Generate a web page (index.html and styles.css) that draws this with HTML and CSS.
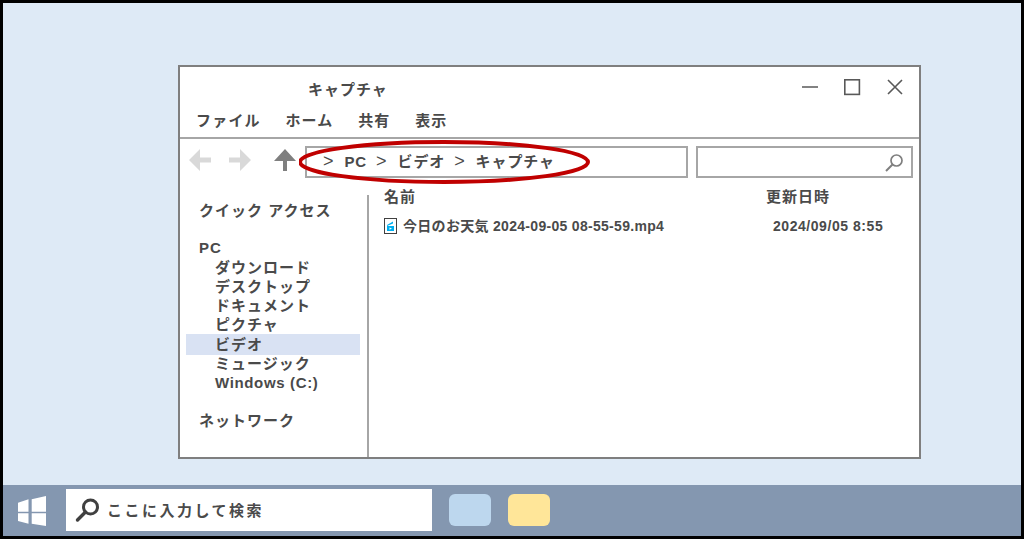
FILE: index.html
```html
<!DOCTYPE html>
<html lang="ja">

<head>
    <meta charset="UTF-8">
    <title>キャプチャ</title>
    <link rel="stylesheet" href="styles.css">
</head>

<body>
    <div class="screen">
        <div class="desktop">
            <div class="window">
                <div class="title-row">
                    <span class="title">キャプチャ</span>
                    <div class="win-buttons">
                        <svg width="18" height="18" viewBox="0 0 18 18"><path d="M1 9H17" stroke="#595959" stroke-width="1.5" fill="none"/></svg>
                        <svg width="18" height="18" viewBox="0 0 18 18"><rect x="1.8" y="1.8" width="14.6" height="14.6" stroke="#595959" stroke-width="1.6" fill="none"/></svg>
                        <svg class="close" width="18" height="18" viewBox="0 0 18 18"><path d="M2 2L16 16M16 2L2 16" stroke="#595959" stroke-width="1.6" fill="none"/></svg>
                    </div>
                </div>
                <div class="menu-row">
                    <span>ファイル</span>
                    <span>ホーム</span>
                    <span>共有</span>
                    <span>表示</span>
                </div>
                <div class="toolbar">
                    <div class="nav-buttons">
                        <svg width="22" height="22" viewBox="0 0 22 22"><path d="M0 11L11 0V8.5H22V13.5H11V22Z" fill="#d9d9d9"/></svg>
                        <svg width="22" height="22" viewBox="0 0 22 22"><path d="M22 11L11 0V8.5H0V13.5H11V22Z" fill="#d9d9d9"/></svg>
                        <svg class="up" width="22" height="22" viewBox="0 0 22 22"><path d="M11 0L22 12H13V22H9V12H0Z" fill="#7f7f7f"/></svg>
                    </div>
                    <div class="address">
                        <span class="sep">&gt;</span><span>PC</span>
                        <span class="sep">&gt;</span><span>ビデオ</span>
                        <span class="sep">&gt;</span><span>キャプチャ</span>
                    </div>
                    <div class="search-box">
                        <svg width="19" height="19" viewBox="0 0 19 19"><circle cx="11.5" cy="7.5" r="5.5" stroke="#7f7f7f" stroke-width="1.7" fill="none"/><path d="M7.5 11.5L1 18" stroke="#7f7f7f" stroke-width="2" fill="none"/></svg>
                    </div>
                </div>
                <div class="content">
                    <div class="sidebar">
                        <div class="side-head">クイック アクセス</div>
                        <div class="side-head gap">PC</div>
                        <div class="side-item">ダウンロード</div>
                        <div class="side-item">デスクトップ</div>
                        <div class="side-item">ドキュメント</div>
                        <div class="side-item">ピクチャ</div>
                        <div class="side-item selected">ビデオ</div>
                        <div class="side-item">ミュージック</div>
                        <div class="side-item latin">Windows (C:)</div>
                        <div class="side-head gap network">ネットワーク</div>
                    </div>
                    <div class="files">
                        <div class="file-head">
                            <span>名前</span>
                            <span>更新日時</span>
                        </div>
                        <div class="file-row">
                            <svg width="13" height="16" viewBox="0 0 13 16"><rect x="0.5" y="0.5" width="12" height="15" fill="#fff" stroke="#404040"/><path d="M3 8H10V13H3Z" fill="#00b0f0"/><path d="M3 7L9 3.5V5.5L3 8Z" fill="#00b0f0"/><path d="M5.5 9.5L8 10.5L5.5 11.8Z" fill="#fff"/></svg>
                            <span class="file-name">今日のお天気 2024-09-05 08-55-59.mp4</span>
                            <span class="file-date">2024/09/05 8:55</span>
                        </div>
                    </div>
                </div>
                <svg class="callout" width="292" height="48" viewBox="0 0 292 48"><ellipse cx="145" cy="24" rx="144" ry="20" stroke="#c00000" stroke-width="4" fill="none"/></svg>
            </div>
        </div>
        <div class="taskbar">
            <svg class="start" width="28" height="30" viewBox="0 0 28 30"><path d="M0 6.7L10.5 3.3V15.7H0ZM13.7 3.3L28 0V15.7H13.7ZM0 17.3H10.5V27.7L0 25ZM13.7 17.3H28V30L13.7 27.7Z" fill="#fff"/></svg>
            <div class="task-search">
                <svg width="26" height="26" viewBox="0 0 26 26"><circle cx="15.5" cy="10" r="7" stroke="#404040" stroke-width="3" fill="none"/><path d="M10.5 15L2.5 23" stroke="#404040" stroke-width="3.4" stroke-linecap="round" fill="none"/></svg>
                <span>ここに入力して検索</span>
            </div>
            <div class="task-app blue"></div>
            <div class="task-app yellow"></div>
        </div>
    </div>
</body>

</html>
```

FILE: styles.css
```css
* {
    box-sizing: border-box;
}

body {
    margin: 0;
    font-family: "Liberation Sans", "Noto Sans CJK JP", sans-serif;
    font-weight: 700;
    color: #4a4a4a;
}

.screen {
    width: 1024px;
    height: 539px;
    border: 3px solid #000;
    display: flex;
    flex-direction: column;
    background: #deeaf6;
}

.desktop {
    flex: 1;
    padding: 62px 0 0 175px;
}

.window {
    position: relative;
    width: 743px;
    height: 394px;
    background: #fff;
    border: 2px solid #7f7f7f;
    display: flex;
    flex-direction: column;
}

.title-row {
    height: 41px;
    display: flex;
    justify-content: space-between;
    padding: 11px 15px 0 128px;
}

.title {
    font-size: 15px;
    line-height: 24px;
    letter-spacing: 1px;
}

.win-buttons {
    display: flex;
    gap: 24px;
}

.win-buttons .close {
    margin-left: 1px;
}

.menu-row {
    height: 31px;
    display: flex;
    gap: 24.6px;
    padding-left: 16px;
    font-size: 15px;
    line-height: 26px;
    letter-spacing: 1.2px;
    border-bottom: 2px solid #a6a6a6;
}

.toolbar {
    height: 48px;
    display: flex;
    align-items: flex-start;
    padding: 7px 6px 0 9px;
}

.nav-buttons {
    display: flex;
    gap: 18px;
    width: 116px;
    padding-top: 3px;
}

.nav-buttons .up {
    margin-left: 5px;
}

.address {
    width: 383px;
    height: 32px;
    border: 2px solid #a6a6a6;
    padding-left: 16px;
    display: flex;
    font-size: 15px;
    line-height: 27px;
    letter-spacing: 0.9px;
    white-space: pre;
}

.sep {
    font-weight: 400;
    margin-right: 10px;
    font-size: 18px;
}

.address span:not(.sep) {
    margin-right: 9px;
}

.search-box {
    width: 217px;
    height: 32px;
    margin-left: 8px;
    border: 2px solid #a6a6a6;
    display: flex;
    align-items: center;
    justify-content: flex-end;
    padding-right: 7px;
}

.content {
    flex: 1;
    display: flex;
    min-height: 0;
    padding-top: 8px;
}

.sidebar {
    width: 189px;
    border-right: 2px solid #a6a6a6;
    padding: 0 7px 0 6px;
    font-size: 15px;
    line-height: 19.3px;
    letter-spacing: 1px;
}

.side-head {
    padding-left: 13px;
    margin-top: 6px;
}

.side-head.gap {
    margin-top: 18px;
}

.side-head.network {
    margin-top: 19px;
}

.side-item {
    padding-left: 29px;
}

.latin {
    letter-spacing: 0.65px;
}

.selected {
    background: #d9e2f3;
    height: 21px;
    margin: -1px 0;
    line-height: 21px;
}

.files {
    flex: 1;
    padding-left: 15px;
    margin-top: -8px;
}

.file-head {
    display: flex;
    font-size: 15px;
    line-height: 20px;
    letter-spacing: 1px;
    gap: 350px;
    margin-bottom: 9px;
}

.file-row {
    display: flex;
    align-items: center;
    font-size: 14px;
    line-height: 20px;
    letter-spacing: 0.3px;
}

.file-name {
    width: 370px;
    margin-left: 6px;
}

.file-date {
    font-size: 14px;
    letter-spacing: 0.55px;
}

.callout {
    position: absolute;
    left: 119px;
    top: 71px;
}

.taskbar {
    height: 51px;
    background: #8497b0;
    display: flex;
    align-items: center;
    padding: 0 0 2px 15px;
}

.start {
    margin: 2px 20px 0 0;
}

.task-search {
    width: 366px;
    height: 42px;
    background: #fff;
    display: flex;
    align-items: center;
    gap: 6px;
    padding-left: 9px;
    font-size: 15px;
    letter-spacing: 2.5px;
    margin-right: 17px;
}

.task-app {
    width: 42px;
    height: 32px;
    border-radius: 6px;
    margin-right: 17px;
}

.blue {
    background: #bdd7ee;
}

.yellow {
    background: #ffe699;
}
```
